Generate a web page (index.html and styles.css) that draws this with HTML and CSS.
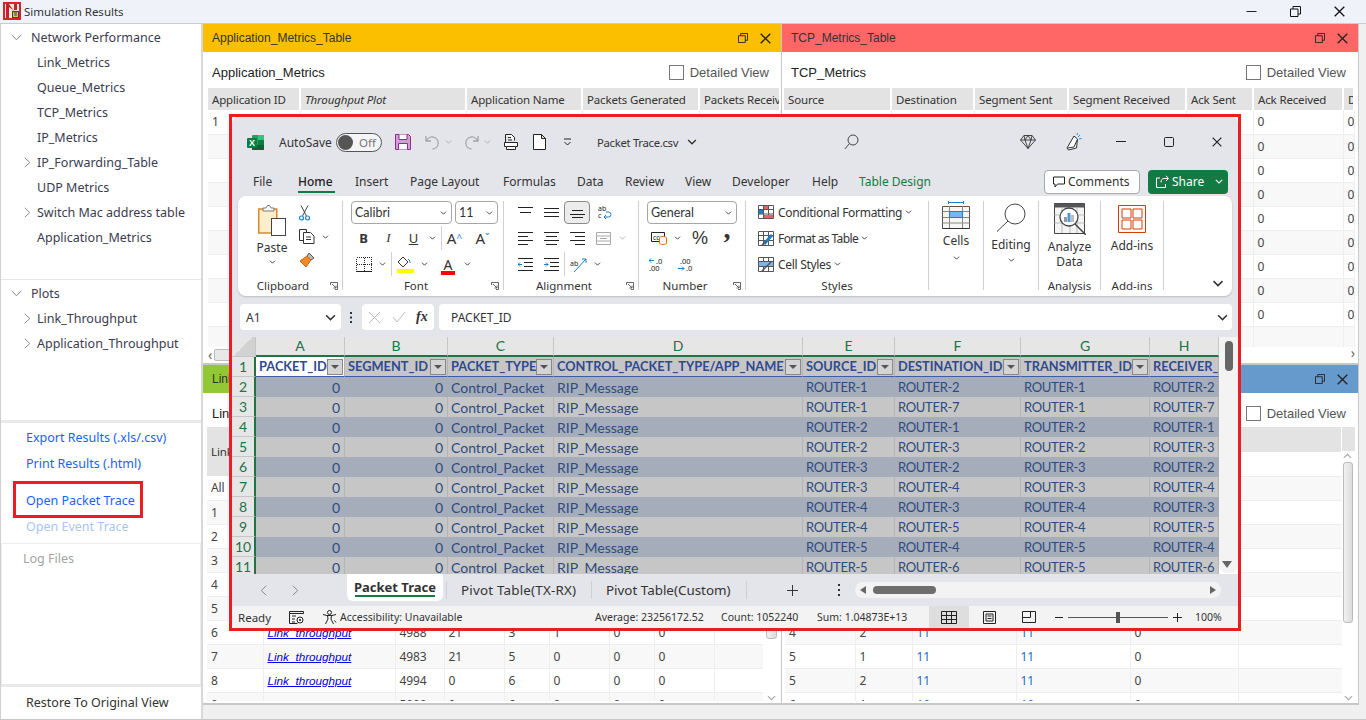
FILE: index.html
```html
<!DOCTYPE html>
<html lang="en">
<head>
<meta charset="utf-8">
<title>Simulation Results</title>
<link rel="stylesheet" href="styles.css">
</head>
<body>
<svg class="defs" width="0" height="0" aria-hidden="true">
  <symbol id="chev" viewBox="0 0 8 5"><path d="M.8.8 4 4 7.2.8" fill="none" stroke="currentColor" stroke-width="1.1"/></symbol>
  <symbol id="launch" viewBox="0 0 8 8"><path d="M.5 3V.5h7v7H5M2 2l4 4M6 3.5V6H3.5" fill="none" stroke="#555" stroke-width=".9"/></symbol>
  <symbol id="tree-down" viewBox="0 0 11 7"><path d="M.8.8 5.5 5.8 10.2.8" fill="none" stroke="#8a8a8a"/></symbol>
  <symbol id="tree-right" viewBox="0 0 7 11"><path d="M.8.8 5.8 5.5.8 10.2" fill="none" stroke="#8a8a8a"/></symbol>
  <symbol id="restore" viewBox="0 0 11 11"><path d="M.5 3h7.5v7.5H.5zM3 3V.5h7.5V8H8" fill="none" stroke="currentColor"/></symbol>
  <symbol id="close" viewBox="0 0 11 11"><path d="M.7.7l9.6 9.6M10.3.7.7 10.3" fill="none" stroke="currentColor" stroke-width="1.3"/></symbol>
</svg>

<div class="app">
  <header class="titlebar">
    <svg class="app-icon" width="18" height="18" viewBox="0 0 18 18"><rect width="18" height="18" fill="#d8232a"/><rect x="2" y="2" width="14" height="14" fill="#f6e9e4"/><path d="M3 2h3l5 7V2h3v6h-4L6 5v11H3z" fill="#c8202a"/><rect x="9.500" y="9.500" width="6" height="6" fill="#e4c35a" stroke="#2d3f6b"/><path d="M11 11h3M11 13h3" stroke="#2d3f6b"/></svg>
    <span class="titlebar-text">Simulation Results</span>
    <div class="winbtns">
      <svg width="11" height="11" viewBox="0 0 11 11"><path d="M.5 5.500h10" stroke="#222"/></svg>
      <svg class="win-max" width="11" height="11"><use href="#restore"/></svg>
      <svg width="11" height="11"><use href="#close"/></svg>
    </div>
  </header>

  <div class="content">
    <aside class="sidebar">
      <nav class="tree tree-a">
        <div class="node root"><svg class="tw" width="11" height="7"><use href="#tree-down"/></svg>Network Performance</div>
        <div class="node">Link_Metrics</div>
        <div class="node">Queue_Metrics</div>
        <div class="node">TCP_Metrics</div>
        <div class="node">IP_Metrics</div>
        <div class="node kid"><svg class="tk" width="7" height="11"><use href="#tree-right"/></svg>IP_Forwarding_Table</div>
        <div class="node">UDP Metrics</div>
        <div class="node kid"><svg class="tk" width="7" height="11"><use href="#tree-right"/></svg>Switch Mac address table</div>
        <div class="node">Application_Metrics</div>
      </nav>
      <nav class="tree tree-b">
        <div class="node root"><svg class="tw" width="11" height="7"><use href="#tree-down"/></svg>Plots</div>
        <div class="node kid"><svg class="tk" width="7" height="11"><use href="#tree-right"/></svg>Link_Throughput</div>
        <div class="node kid"><svg class="tk" width="7" height="11"><use href="#tree-right"/></svg>Application_Throughput</div>
      </nav>
      <div class="actions">
        <a class="act">Export Results (.xls/.csv)</a>
        <a class="act">Print Results (.html)</a>
        <a class="act act-trace">Open Packet Trace</a>
        <a class="act act-off">Open Event Trace</a>
      </div>
      <div class="logs">Log Files</div>
      <div class="restore">Restore To Original View</div>
    </aside>

    <main class="panels">
      <section class="panel">
        <div class="phead ph-yellow"><span>Application_Metrics_Table</span><svg class="pico" width="10" height="10"><use href="#restore"/></svg><svg width="11" height="11"><use href="#close"/></svg></div>
        <div class="ptitle"><span>Application_Metrics</span><label class="detail"><i class="cb"></i>Detailed View</label></div>
        <div class="tblwrap tw-top">
          <table class="dt dt-app">
            <colgroup><col class="a1"><col class="a2"><col class="a3"><col class="a4"><col class="a5"></colgroup>
            <thead><tr><th>Application ID</th><th class="it">Throughput Plot</th><th>Application Name</th><th>Packets Generated</th><th>Packets Received</th></tr></thead>
            <tbody>
              <tr><td>1</td><td></td><td></td><td></td><td></td></tr>
              <tr><td></td><td></td><td></td><td></td><td></td></tr>
              <tr><td></td><td></td><td></td><td></td><td></td></tr>
              <tr><td></td><td></td><td></td><td></td><td></td></tr>
              <tr><td></td><td></td><td></td><td></td><td></td></tr>
              <tr><td></td><td></td><td></td><td></td><td></td></tr>
              <tr><td></td><td></td><td></td><td></td><td></td></tr>
              <tr><td></td><td></td><td></td><td></td><td></td></tr>
              <tr><td></td><td></td><td></td><td></td><td></td></tr>
              <tr><td></td><td></td><td></td><td></td><td></td></tr>
            </tbody>
          </table>
        </div>
        <div class="hscroll"><span class="ha">&#8249;</span><i class="hthumb"></i></div>
      </section>

      <section class="panel">
        <div class="phead ph-red"><span>TCP_Metrics_Table</span><svg class="pico" width="10" height="10"><use href="#restore"/></svg><svg width="11" height="11"><use href="#close"/></svg></div>
        <div class="ptitle"><span>TCP_Metrics</span><label class="detail"><i class="cb"></i>Detailed View</label></div>
        <div class="tblwrap tw-top tw-r">
          <table class="dt dt-tcp">
            <colgroup><col class="t1"><col class="t2"><col class="t3"><col class="t4"><col class="t5"><col class="t6"><col class="t7"></colgroup>
            <thead><tr><th>Source</th><th>Destination</th><th>Segment Sent</th><th>Segment Received</th><th>Ack Sent</th><th>Ack Received</th><th>Dup Ack</th></tr></thead>
            <tbody>
              <tr><td></td><td></td><td></td><td></td><td></td><td>0</td><td>0</td></tr>
              <tr><td></td><td></td><td></td><td></td><td></td><td>0</td><td>0</td></tr>
              <tr><td></td><td></td><td></td><td></td><td></td><td>0</td><td>0</td></tr>
              <tr><td></td><td></td><td></td><td></td><td></td><td>0</td><td>0</td></tr>
              <tr><td></td><td></td><td></td><td></td><td></td><td>0</td><td>0</td></tr>
              <tr><td></td><td></td><td></td><td></td><td></td><td>0</td><td>0</td></tr>
              <tr><td></td><td></td><td></td><td></td><td></td><td>0</td><td>0</td></tr>
              <tr><td></td><td></td><td></td><td></td><td></td><td>0</td><td>0</td></tr>
              <tr><td></td><td></td><td></td><td></td><td></td><td>0</td><td>0</td></tr>
              <tr><td></td><td></td><td></td><td></td><td></td><td></td><td></td></tr>
            </tbody>
          </table>
        </div>
        <div class="hscroll hs-r"><span class="ha">&#8250;</span></div>
      </section>

      <section class="panel">
        <div class="phead ph-green"><span>Link_Metrics_Table</span></div>
        <div class="ptitle"><span>Link_Metrics</span></div>
        <div class="lowbody">
          <div class="tblwrap tw-low">
            <table class="dt dt-link">
              <colgroup><col class="l1"><col class="l2"><col class="l3"><col class="l4"><col class="l5"><col class="l6"><col class="l7"><col class="l8"><col class="l9"></colgroup>
              <thead><tr class="tall"><th>Link ID</th><th class="it">Link Plot</th><th></th><th></th><th></th><th></th><th></th><th></th><th></th></tr></thead>
              <tbody>
                <tr><td>All</td><td></td><td></td><td></td><td></td><td></td><td></td><td></td><td></td></tr>
                <tr><td>1</td><td></td><td></td><td></td><td></td><td></td><td></td><td></td><td></td></tr>
                <tr><td>2</td><td></td><td></td><td></td><td></td><td></td><td></td><td></td><td></td></tr>
                <tr><td>3</td><td></td><td></td><td></td><td></td><td></td><td></td><td></td><td></td></tr>
                <tr><td>4</td><td></td><td></td><td></td><td></td><td></td><td></td><td></td><td></td></tr>
                <tr><td>5</td><td></td><td></td><td></td><td></td><td></td><td></td><td></td><td></td></tr>
                <tr><td>6</td><td><a class="lnk">Link_throughput</a></td><td>4988</td><td>21</td><td>3</td><td>1</td><td>0</td><td>0</td><td></td></tr>
                <tr><td>7</td><td><a class="lnk">Link_throughput</a></td><td>4983</td><td>21</td><td>5</td><td>0</td><td>0</td><td>0</td><td></td></tr>
                <tr><td>8</td><td><a class="lnk">Link_throughput</a></td><td>4994</td><td>0</td><td>6</td><td>0</td><td>0</td><td>0</td><td></td></tr>
                <tr><td>9</td><td><a class="lnk">Link_throughput</a></td><td>5000</td><td>0</td><td>6</td><td>0</td><td>0</td><td>0</td><td></td></tr>
              </tbody>
            </table>
          </div>
          <div class="vscroll vs-link"><i class="vthumb vt-link"></i><svg class="vdown" width="9" height="6"><use href="#chev"/></svg></div>
        </div>
      </section>

      <section class="panel">
        <div class="phead ph-blue"><span>Queue_Metrics_Table</span><svg class="pico" width="10" height="10"><use href="#restore"/></svg><svg width="11" height="11"><use href="#close"/></svg></div>
        <div class="ptitle"><span>Queue_Metrics</span><label class="detail"><i class="cb"></i>Detailed View</label></div>
        <div class="lowbody">
          <div class="tblwrap tw-low tw-lr">
            <table class="dt dt-q">
              <colgroup><col class="q1"><col class="q2"><col class="q3"><col class="q4"><col class="q5"><col class="q6"><col class="q7"></colgroup>
              <thead><tr><th></th><th></th><th></th><th></th><th></th><th></th><th></th></tr></thead>
              <tbody>
                <tr><td></td><td></td><td></td><td></td><td></td><td></td><td></td></tr>
                <tr><td></td><td></td><td></td><td></td><td></td><td></td><td></td></tr>
                <tr><td></td><td></td><td></td><td></td><td></td><td></td><td></td></tr>
                <tr><td></td><td></td><td></td><td></td><td></td><td></td><td></td></tr>
                <tr><td></td><td></td><td></td><td></td><td></td><td></td><td></td></tr>
                <tr><td></td><td></td><td></td><td></td><td></td><td></td><td></td></tr>
                <tr><td></td><td></td><td></td><td></td><td></td><td></td><td></td></tr>
                <tr><td>4</td><td>2</td><td class="num">11</td><td class="num">11</td><td>0</td><td></td><td></td></tr>
                <tr><td>5</td><td>1</td><td class="num">11</td><td class="num">11</td><td>0</td><td></td><td></td></tr>
                <tr><td>5</td><td>2</td><td class="num">11</td><td class="num">11</td><td>0</td><td></td><td></td></tr>
                <tr><td>6</td><td>1</td><td class="num">10</td><td class="num">10</td><td>0</td><td></td><td></td></tr>
              </tbody>
            </table>
          </div>
          <div class="vscroll vs-q"><svg class="vup" width="9" height="6"><use href="#chev"/></svg><i class="vthumb vt-q"></i><svg class="vdown" width="9" height="6"><use href="#chev"/></svg></div>
        </div>
      </section>
    </main>
  </div>

  <section class="excel">
    <div class="xl">
      <div class="xl-top">
        <svg class="xl-logo" width="17" height="17" viewBox="0 0 17 17"><rect x="5" y="1" width="12" height="15" rx="1" fill="#21a366"/><rect x="11" y="1" width="6" height="5" fill="#33c481"/><rect x="11" y="6" width="6" height="5" fill="#107c41"/><rect x="5" y="11" width="12" height="5" fill="#185c37"/><rect y="4" width="10" height="10" rx="1" fill="#107c41"/><text x="5" y="12" class="xl-x">X</text></svg>
        <span class="autosave">AutoSave</span>
        <span class="toggle"><i></i>Off</span>
        <svg class="t-save" width="16" height="16" viewBox="0 0 16 16"><path d="M.5.500h13l2 2v13H.5z" fill="#d79bd9" stroke="#8a2e92"/><path d="M4 .5v5h8v-5M3.500 15.500v-6h9v6" fill="#fff" stroke="#8a2e92"/></svg>
        <svg class="t-undo" width="15" height="15" viewBox="0 0 15 15"><path d="M1 1v5h5M1.500 6a6 6 0 1 1 6 8" fill="none" stroke="#a5a5a8" stroke-width="1.300"/></svg>
        <svg class="t-c1 dim" width="7" height="4"><use href="#chev"/></svg>
        <svg class="t-redo" width="15" height="15" viewBox="0 0 15 15"><path d="M14 1v5H9M13.500 6a6 6 0 1 0-6 8" fill="none" stroke="#a5a5a8" stroke-width="1.300"/></svg>
        <svg class="t-c2 dim" width="7" height="4"><use href="#chev"/></svg>
        <svg class="t-print" width="14" height="16" viewBox="0 0 14 16"><path d="M1.500.5h6l3 3v3M1.500.5v8M4 3.500h3M4 6h4" fill="#fff" stroke="#222"/><path d="M.5 8.500h13v4h-2v3h-9v-3h-2z" fill="#fff" stroke="#222"/><path d="M3 12.500h8" stroke="#222"/></svg>
        <svg class="t-new" width="13" height="16" viewBox="0 0 13 16"><path d="M.5.500h8l4 4v11H.5zM8.500.500v4h4" fill="#fff" stroke="#222"/></svg>
        <svg class="t-cust" width="9" height="8" viewBox="0 0 9 8"><path d="M1 1h7M1.500 4 4.500 7l3-3" fill="none" stroke="#222"/></svg>
        <span class="xl-file">Packet Trace.csv</span>
        <svg class="t-fch" width="10" height="6"><use href="#chev"/></svg>
        <svg class="t-search" width="15" height="16" viewBox="0 0 15 16"><circle cx="9" cy="6" r="5" fill="none" stroke="#444"/><path d="M5.500 9.500.8 15" stroke="#444"/></svg>
        <svg class="t-gem" width="16" height="14" viewBox="0 0 16 14"><path d="M4 .5h8l3.500 4.500L8 13.500.5 5zM.5 5h15M5 5l3 8.500L11 5M4 .5 5 5l3-4.500L11 5l1-4.500" fill="none" stroke="#333" stroke-width=".9"/></svg>
        <svg class="t-pen" width="16" height="18" viewBox="0 0 16 18"><path d="M8 3 1 15l1.500 2 8-2 1-9z" fill="#fff" stroke="#333"/><path d="M2 15l6-1 3-7" fill="none" stroke="#333"/><path d="M12 4l2-2M13 6l2.500-.5M11 2l.5-2" stroke="#1f8fd6"/></svg>
        <svg class="t-min" width="10" height="2"><path d="M0 .5h10" stroke="#222"/></svg>
        <svg class="t-max" width="10" height="10"><rect x=".5" y=".5" width="9" height="9" rx="1" fill="none" stroke="#222"/></svg>
        <svg class="t-cls" width="10" height="10"><use href="#close"/></svg>
      </div>

      <div class="xl-tabs">
        <span class="tab t1">File</span>
        <span class="tab t2 on">Home</span>
        <span class="tab t3">Insert</span>
        <span class="tab t4">Page Layout</span>
        <span class="tab t5">Formulas</span>
        <span class="tab t6">Data</span>
        <span class="tab t7">Review</span>
        <span class="tab t8">View</span>
        <span class="tab t9">Developer</span>
        <span class="tab t10">Help</span>
        <span class="tab t11 grn">Table Design</span>
        <button class="comments"><svg width="12" height="12" viewBox="0 0 12 12"><path d="M.5 1h11v7H4.500L2 11V8H.5z" fill="none" stroke="#222"/></svg>Comments</button>
        <button class="share"><svg width="13" height="13" viewBox="0 0 13 13"><path d="M10 .8 12.500 3.500 10 6M12 3.500H8C6 3.500 5 5 5 7.500M4 3H.5v9.500h9V9" fill="none" stroke="#fff"/></svg>Share<svg class="sh-ch" width="8" height="5"><use href="#chev"/></svg></button>
      </div>

      <div class="ribbon">
        <div class="grp g-clip">
          <div class="grp-body clip-body">
            <div class="paste">
              <svg width="28" height="31" viewBox="0 0 28 31"><rect x=".75" y="4" width="18" height="24" fill="#fbeecd" stroke="#dc8a25" stroke-width="1.500"/><path d="M5 6V3h3l1.500-2.500h2L13 3h3v3z" fill="#fff" stroke="#777"/><rect x="13.500" y="13.500" width="14" height="17" fill="#fff" stroke="#444"/></svg>
              <span>Paste</span>
              <svg class="p-ch" width="7" height="4"><use href="#chev"/></svg>
            </div>
            <div class="clip-tools">
              <svg class="ct" width="11" height="16" viewBox="0 0 11 16"><path d="M2 .5l5.500 10.500M9 .5 3.500 11" stroke="#444" fill="none"/><circle cx="2.500" cy="13" r="2" fill="none" stroke="#1d7fcb" stroke-width="1.200"/><circle cx="8.500" cy="13" r="2" fill="none" stroke="#1d7fcb" stroke-width="1.200"/></svg>
              <div class="ct-row"><svg width="16" height="15" viewBox="0 0 16 15"><path d="M4.500 11.500H.5V.5h7v3" fill="#fff" stroke="#333"/><path d="M4.500 3.500h7l3.500 3.500v7.500H4.500zM7 8h5M7 10.500h5" fill="#fff" stroke="#333"/></svg><svg class="c-v" width="7" height="4"><use href="#chev"/></svg></div>
              <svg class="ct" width="16" height="16" viewBox="0 0 16 16"><path d="M10 1l5 5-3 2-4-4z" fill="#bbb" stroke="#555"/><path d="M8 4 1 9l6 6 5-7z" fill="#f0892a" stroke="#c9650e"/></svg>
            </div>
          </div>
          <div class="grp-label lab-l">Clipboard<svg class="launch" width="8" height="8"><use href="#launch"/></svg></div>
        </div>

        <div class="grp g-font">
          <div class="grp-body">
            <div class="sel-row">
              <div class="sel s-font"><span>Calibri</span><svg width="7" height="4"><use href="#chev"/></svg></div>
              <div class="sel s-size"><span>11</span><svg width="7" height="4"><use href="#chev"/></svg></div>
            </div>
            <div class="irow">
              <b class="ib w25 serifb">B</b><i class="ib w25 serifi">I</i><span class="ib w25 ul">U</span><svg class="iv" width="7" height="4"><use href="#chev"/></svg><i class="vsep"></i><span class="ib w25 big">A<sup>^</sup></span><span class="ib w25 big m3">A<sup class="down">&#711;</sup></span>
            </div>
            <div class="irow">
              <span class="ib w25"><svg class="crisp" width="16" height="15" viewBox="0 0 16 15"><path d="M.5.500h15v14H.5zM8 .5v14M.5 7.500h15" fill="none" stroke="#222" stroke-dasharray="1 1"/><path d="M.5 14.500h15" stroke="#222"/></svg></span><svg class="iv" width="7" height="4"><use href="#chev"/></svg><i class="vsep"></i>
              <span class="ib w26"><svg width="17" height="17" viewBox="0 0 17 17"><path d="M6 1 1 6l5 5 5-5z" fill="#fff" stroke="#333"/><path d="M11 3c2 1 2 3 2 4" fill="none" stroke="#1d7fcb"/><rect y="13" width="17" height="4" fill="#ff0"/></svg></span><svg class="iv" width="7" height="4"><use href="#chev"/></svg>
              <span class="ib w26 m4 colora">A</span><svg class="iv" width="7" height="4"><use href="#chev"/></svg>
            </div>
          </div>
          <div class="grp-label lab-l">Font<svg class="launch" width="8" height="8"><use href="#launch"/></svg></div>
        </div>

        <div class="grp g-align">
          <div class="grp-body">
            <div class="irow irow1">
              <span class="ib w26"><svg width="15" height="11" viewBox="0 0 15 11"><path d="M0 .5h15M2 5.500h11" stroke="#222"/></svg></span>
              <span class="ib w26"><svg width="15" height="11" viewBox="0 0 15 11"><path d="M0 1.500h15M0 5.500h15M0 9.500h15" stroke="#222"/></svg></span>
              <span class="ib w26 sel-btn"><svg width="15" height="11" viewBox="0 0 15 11"><path d="M2 3.500h11M0 7.500h15M2 10.500h11" stroke="#222"/></svg></span>
              <span class="ib w26 m1"><svg width="15" height="15" viewBox="0 0 15 15"><text x="1" y="6" class="mini">ab</text><text x="1" y="13" class="mini">c</text><path d="M9 7h2.500a2.500 2.500 0 0 1 0 5H7m2-2-2 2 2 2" fill="none" stroke="#1d7fcb"/></svg></span>
            </div>
            <div class="irow">
              <span class="ib w26"><svg width="15" height="13" viewBox="0 0 15 13"><path d="M0 .5h15M0 4.500h10M0 8.500h15M0 12.500h10" stroke="#222"/></svg></span>
              <span class="ib w26"><svg width="15" height="13" viewBox="0 0 15 13"><path d="M0 .5h15M2 4.500h11M0 8.500h15M2 12.500h11" stroke="#222"/></svg></span>
              <span class="ib w26"><svg width="15" height="13" viewBox="0 0 15 13"><path d="M0 .5h15M5 4.500h10M0 8.500h15M5 12.500h10" stroke="#222"/></svg></span>
              <span class="ib w26 merge"><svg width="15" height="13" viewBox="0 0 15 13"><path d="M.5.500h14v12H.5zM.5 4h14M.5 9h14M4 6.500h7" fill="none" stroke="#a8a8a8"/></svg></span><svg class="iv dim" width="7" height="4"><use href="#chev"/></svg>
            </div>
            <div class="irow">
              <span class="ib w26"><svg width="15" height="13" viewBox="0 0 15 13"><path d="M0 .5h15M6 4.500h9M6 8.500h9M0 12.500h15" stroke="#222"/><path d="M4 6.500H0m2-2-2 2 2 2" fill="none" stroke="#1d7fcb"/></svg></span>
              <span class="ib w26"><svg width="15" height="13" viewBox="0 0 15 13"><path d="M0 .5h15M6 4.500h9M6 8.500h9M0 12.500h15" stroke="#222"/><path d="M0 6.500h4m-2-2 2 2-2 2" fill="none" stroke="#1d7fcb"/></svg></span>
              <i class="vsep s1"></i>
              <span class="ib w26"><svg width="17" height="15" viewBox="0 0 17 15"><path d="M4 15 16 2m-4 0h4v4" fill="none" stroke="#1d7fcb"/><text x="0" y="9" class="mini">ab</text></svg></span><svg class="iv" width="7" height="4"><use href="#chev"/></svg>
            </div>
          </div>
          <div class="grp-label lab-l">Alignment<svg class="launch" width="8" height="8"><use href="#launch"/></svg></div>
        </div>

        <div class="grp g-num">
          <div class="grp-body">
            <div class="sel-row"><div class="sel s-num"><span>General</span><svg width="7" height="4"><use href="#chev"/></svg></div></div>
            <div class="irow">
              <span class="ib w24"><svg width="16" height="14" viewBox="0 0 16 14"><path d="M.5 1.500h13v9H.5z" fill="none" stroke="#222"/><text x="2" y="8.500" class="mini">cc</text><ellipse cx="12" cy="7" rx="3.500" ry="1.500" fill="#fff" stroke="#d9731a"/><path d="M8.500 7v5c0 2 7 2 7 0V7" fill="#fff" stroke="#d9731a"/></svg></span><svg class="iv" width="7" height="4"><use href="#chev"/></svg>
              <span class="ib w24 m4 pct">%</span>
              <span class="ib w24 m3 comma">,</span>
            </div>
            <div class="irow r-dec">
              <span class="ib w26 dec"><svg width="15" height="15" viewBox="0 0 15 15"><path d="M5 3.500H0m2-2-2 2 2 2" fill="none" stroke="#1d7fcb"/><text x="7" y="6.500" class="mini2">.0</text><text x="0" y="14" class="mini2">.00</text></svg></span>
              <span class="ib w26 m3 dec"><svg width="15" height="15" viewBox="0 0 15 15"><text x="2" y="6.500" class="mini2">.00</text><path d="M0 11.500h6m-2-2 2 2-2 2" fill="none" stroke="#1d7fcb"/><text x="8" y="14" class="mini2">.0</text></svg></span>
            </div>
          </div>
          <div class="grp-label lab-n">Number<svg class="launch" width="8" height="8"><use href="#launch"/></svg></div>
        </div>

        <div class="grp g-styles">
          <div class="grp-body st-body">
            <div class="st-row"><svg width="16" height="14" viewBox="0 0 16 14"><path d="M.5.500h15v13H.5zM.5 4.500h15M.5 9h15M5.500.5v13M10.500.5v13" fill="#fff" stroke="#555"/><rect x="1" y="5" width="4" height="4" fill="#1d7fcb"/><rect x="6" y="1" width="4" height="3" fill="#e2646a"/><rect x="6" y="10" width="9" height="3" fill="#e2646a"/></svg>Conditional Formatting<svg class="st-ch" width="7" height="4"><use href="#chev"/></svg></div>
            <div class="st-row st-fmt"><svg width="16" height="15" viewBox="0 0 16 15"><path d="M.5.500h15v14H.5zM.5 4.500h15M.5 9.500h15M5.500.5v14M10.500.5v14" fill="#fff" stroke="#555"/><path d="M6 13 14 4" stroke="#1d7fcb" stroke-width="3"/><path d="M4 14 8 10" stroke="#555" stroke-width="1.500"/></svg>Format as Table<svg class="st-ch" width="7" height="4"><use href="#chev"/></svg></div>
            <div class="st-row"><svg width="16" height="15" viewBox="0 0 16 15"><path d="M.5.500h15v14H.5zM.5 4.500h15M.5 9.500h15M5.500.5v14M10.500.5v14" fill="#fff" stroke="#555"/><rect x="1" y="5" width="14" height="4" fill="#7bb6e6"/><path d="M4 14 13 5" stroke="#555" stroke-width="1.500"/></svg>Cell Styles<svg class="st-ch" width="7" height="4"><use href="#chev"/></svg></div>
          </div>
          <div class="grp-label">Styles</div>
        </div>

        <div class="grp g-big g-cells">
          <div class="grp-body bigbody">
            <svg width="28" height="29" viewBox="0 0 28 29"><path d="M6.500 1.500h15M6.500 0v3M21.500 0v3" fill="none" stroke="#1d7fcb"/><path d="M.5 5.500h27v22H.5z" fill="#f6f6f6" stroke="#555"/><path d="M.5 10.500h27M.5 16.500h27M.5 22h27M7.500 5v22M20.500 5v22" stroke="#888"/><path d="M.5 27.500h27" stroke="#333"/><rect x="7.500" y="10.500" width="13" height="6" fill="#7bb6e6" stroke="#1d7fcb"/></svg>
            <span class="biglab">Cells</span>
            <svg class="bigch" width="7" height="4"><use href="#chev"/></svg>
          </div>
          <div class="grp-label"></div>
        </div>

        <div class="grp g-big g-edit">
          <div class="grp-body bigbody">
            <svg width="30" height="29" viewBox="0 0 30 29"><circle cx="19" cy="11" r="10" fill="#fff" stroke="#444"/><path d="M12 18 1 28.500" stroke="#444"/></svg>
            <span class="biglab">Editing</span>
            <svg class="bigch" width="7" height="4"><use href="#chev"/></svg>
          </div>
          <div class="grp-label"></div>
        </div>

        <div class="grp g-big g-ana">
          <div class="grp-body bigbody">
            <svg width="32" height="32" viewBox="0 0 32 32"><path d="M.5.500h30v30H.5z" fill="#f4f4f4" stroke="#444"/><path d="M.5.500h30v4H.5z" fill="#555"/><path d="M.5 12h30M.5 20h30M8 4v26M16 4v26M23 4v26" stroke="#bbb"/><circle cx="15" cy="14" r="9" fill="#fff" stroke="#444" stroke-width="1.300"/><rect x="10" y="14" width="3" height="5" fill="#999"/><rect x="13.500" y="10" width="3" height="9" fill="#4a9ad8"/><rect x="17" y="12" width="3" height="7" fill="#bbb"/><path d="M21 21 32 32" stroke="#444" stroke-width="1.500"/></svg>
            <span class="biglab two">Analyze<br>Data</span>
          </div>
          <div class="grp-label">Analysis</div>
        </div>

        <div class="grp g-big g-add">
          <div class="grp-body bigbody">
            <svg class="addi" width="28" height="28" viewBox="0 0 28 28"><path d="M.5.500h27v27H.5z" fill="#fff" stroke="#d83b01"/><path d="M4 4h9v9H4zM15 4h9v9h-9zM4 15h9v9H4zM15 15h9v9h-9z" fill="#fff" stroke="#d83b01"/></svg>
            <span class="biglab">Add-ins</span>
          </div>
          <div class="grp-label">Add-ins</div>
        </div>
        <svg class="collapse" width="12" height="7"><use href="#chev"/></svg>
      </div>

      <div class="fbar">
        <div class="namebox"><span>A1</span><svg width="11" height="7"><use href="#chev"/></svg></div>
        <svg class="fdots" width="3" height="13" viewBox="0 0 3 13"><rect width="2" height="2" y="1" fill="#333"/><rect width="2" height="2" y="5.500" fill="#333"/><rect width="2" height="2" y="10" fill="#333"/></svg>
        <div class="fxbox">
          <svg width="13" height="13" viewBox="0 0 13 13"><path d="M1 1l11 11M12 1 1 12" stroke="#bdbdbd"/></svg>
          <svg width="14" height="12" viewBox="0 0 14 12"><path d="M1 6l4 5 8-10" fill="none" stroke="#bdbdbd"/></svg>
          <span class="fx">fx</span>
        </div>
        <div class="formula"><span>PACKET_ID</span><svg width="11" height="7"><use href="#chev"/></svg></div>
      </div>

      <div class="sheet">
        <table class="grid">
          <colgroup><col class="c0"><col class="ca"><col class="cb2"><col class="cc"><col class="cd"><col class="ce"><col class="cf"><col class="cg"><col class="ch"></colgroup>
          <thead>
            <tr class="letters"><th class="corner"></th><th>A</th><th>B</th><th>C</th><th>D</th><th>E</th><th>F</th><th>G</th><th>H</th></tr>
          </thead>
          <tbody>
            <tr class="hdr"><th>1</th><td class="a1cell"><div>PACKET_ID<i class="fb"></i></div></td><td><div>SEGMENT_ID<i class="fb"></i></div></td><td><div>PACKET_TYPE<i class="fb"></i></div></td><td><div>CONTROL_PACKET_TYPE/APP_NAME<i class="fb"></i></div></td><td><div>SOURCE_ID<i class="fb"></i></div></td><td><div>DESTINATION_ID<i class="fb"></i></div></td><td><div>TRANSMITTER_ID<i class="fb"></i></div></td><td><div>RECEIVER_ID</div></td></tr>
            <tr><th>2</th><td class="n">0</td><td class="n">0</td><td>Control_Packet</td><td>RIP_Message</td><td>ROUTER-1</td><td>ROUTER-2</td><td>ROUTER-1</td><td>ROUTER-2</td></tr>
            <tr><th>3</th><td class="n">0</td><td class="n">0</td><td>Control_Packet</td><td>RIP_Message</td><td>ROUTER-1</td><td>ROUTER-7</td><td>ROUTER-1</td><td>ROUTER-7</td></tr>
            <tr><th>4</th><td class="n">0</td><td class="n">0</td><td>Control_Packet</td><td>RIP_Message</td><td>ROUTER-2</td><td>ROUTER-1</td><td>ROUTER-2</td><td>ROUTER-1</td></tr>
            <tr><th>5</th><td class="n">0</td><td class="n">0</td><td>Control_Packet</td><td>RIP_Message</td><td>ROUTER-2</td><td>ROUTER-3</td><td>ROUTER-2</td><td>ROUTER-3</td></tr>
            <tr><th>6</th><td class="n">0</td><td class="n">0</td><td>Control_Packet</td><td>RIP_Message</td><td>ROUTER-3</td><td>ROUTER-2</td><td>ROUTER-3</td><td>ROUTER-2</td></tr>
            <tr><th>7</th><td class="n">0</td><td class="n">0</td><td>Control_Packet</td><td>RIP_Message</td><td>ROUTER-3</td><td>ROUTER-4</td><td>ROUTER-3</td><td>ROUTER-4</td></tr>
            <tr><th>8</th><td class="n">0</td><td class="n">0</td><td>Control_Packet</td><td>RIP_Message</td><td>ROUTER-4</td><td>ROUTER-3</td><td>ROUTER-4</td><td>ROUTER-3</td></tr>
            <tr><th>9</th><td class="n">0</td><td class="n">0</td><td>Control_Packet</td><td>RIP_Message</td><td>ROUTER-4</td><td>ROUTER-5</td><td>ROUTER-4</td><td>ROUTER-5</td></tr>
            <tr><th>10</th><td class="n">0</td><td class="n">0</td><td>Control_Packet</td><td>RIP_Message</td><td>ROUTER-5</td><td>ROUTER-4</td><td>ROUTER-5</td><td>ROUTER-4</td></tr>
            <tr><th>11</th><td class="n">0</td><td class="n">0</td><td>Control_Packet</td><td>RIP_Message</td><td>ROUTER-5</td><td>ROUTER-6</td><td>ROUTER-5</td><td>ROUTER-6</td></tr>
          </tbody>
        </table>
        <div class="sheet-vs"><i class="sv-thumb"></i><i class="sv-down"></i></div>
      </div>

      <div class="sheets">
        <svg class="sh-l" width="7" height="11"><use href="#tree-right"/></svg>
        <svg class="sh-r" width="7" height="11"><use href="#tree-right"/></svg>
        <span class="stab active">Packet Trace</span>
        <i class="ssep"></i>
        <span class="stab s-tx">Pivot Table(TX-RX)</span>
        <i class="ssep"></i>
        <span class="stab s-cu">Pivot Table(Custom)</span>
        <i class="ssep"></i>
        <svg class="s-plus" width="11" height="11"><path d="M5.500 0v11M0 5.500h11" stroke="#333"/></svg>
        <svg class="s-more" width="3" height="12" viewBox="0 0 3 12"><rect y="0" width="2" height="2" fill="#333"/><rect y="5" width="2" height="2" fill="#333"/><rect y="10" width="2" height="2" fill="#333"/></svg>
        <div class="sh-scroll"><i class="tri-l"></i><i class="sh-thumb"></i><i class="tri-r"></i></div>
      </div>

      <footer class="status">
        <span>Ready</span>
        <svg class="st-mac" width="15" height="13" viewBox="0 0 15 13"><path d="M.5.500h14v2H.5zM.5 2.500v10h8M3 5h4M3 8h3M3 11h3" fill="none" stroke="#222"/><circle cx="11" cy="9" r="3" fill="none" stroke="#222"/><circle cx="11" cy="9" r="1" fill="#222"/></svg>
        <svg class="st-acc" width="15" height="15" viewBox="0 0 15 15"><circle cx="7.500" cy="2.500" r="2" fill="none" stroke="#222"/><path d="M1 4.500 5 5.500h5l4-1M5.500 5.500 6 9l-2.500 5M9.500 5.500 9 9l2.500 5" fill="none" stroke="#222"/><path d="M12.500 10.500l1.500 2" stroke="#222"/></svg>
        <span class="st-small">Accessibility: Unavailable</span>
        <span class="st-small st-avg">Average: 23256172.52</span>
        <span class="st-small st-cnt">Count: 1052240</span>
        <span class="st-small st-sum">Sum: 1.04873E+13</span>
        <span class="vbtn on"><svg width="16" height="13" viewBox="0 0 16 13"><path d="M.5.500h15v12H.5zM.5 4.500h15M.5 8.500h15M5.500.5v12M10.500.5v12" fill="none" stroke="#222"/></svg></span>
        <span class="vbtn"><svg width="13" height="13" viewBox="0 0 13 13"><path d="M.5.500h12v12H.5zM3 3h7v7H3zM4.500 5h4M4.500 7.500h4" fill="none" stroke="#222"/></svg></span>
        <span class="vbtn"><svg width="14" height="12" viewBox="0 0 14 12"><path d="M.5.500h13v11H.5zM8.500.5v6h-8" fill="none" stroke="#222"/></svg></span>
        <svg class="z-minus" width="8" height="1"><path d="M0 .5h8" stroke="#222"/></svg>
        <div class="zoom-track"><i></i></div>
        <svg class="z-plus" width="9" height="9"><path d="M4.500 0v9M0 4.500h9" stroke="#222"/></svg>
        <span class="st-small z-val">100%</span>
      </footer>
    </div>
  </section>
</div>
</body>
</html>
```

FILE: styles.css
```css
* { box-sizing: border-box; }
html, body { margin: 0; height: 100%; }
body { background: #f0f0f0; font-family: "Noto Sans", sans-serif; font-size: 12px; color: #333; overflow: hidden; }
svg { display: block; flex: none; color: #333; }
.defs { position: absolute; }
.dim { color: #aaa; }
.crisp { shape-rendering: crispEdges; }

.app { position: relative; width: 1366px; height: 720px; overflow: hidden; display: flex; flex-direction: column; }

/* host window */
.titlebar { height: 24px; background: #eff3f9; border-bottom: 1px solid #c9cdd2; display: flex; align-items: center; padding-left: 3px; flex: none; }
.app-icon { margin-top: -2px; }
.titlebar-text { margin-left: 3px; font-size: 11.500px; color: #333; }
.winbtns { margin-left: auto; display: flex; align-items: center; gap: 33px; padding-right: 21px; }
.winbtns svg { color: #111; }

.content { flex: 1; display: flex; min-height: 0; border-bottom: 1px solid #c8c8c8; }
.sidebar { width: 203px; flex: none; background: #fff; border-left: 1px solid #d0d0d0; border-right: 2px solid #d8d8d8; display: flex; flex-direction: column; }
.tree { color: #3b3b4f; }
.tree-a { height: 256px; padding-top: 1px; border-bottom: 1px solid #e6e6e6; }
.tree-b { height: 143px; padding-top: 1px; border-bottom: 3px solid #e9e9e9; }
.node { height: 25px; display: flex; align-items: center; padding-left: 36px; font-size: 12.500px; white-space: nowrap; }
.node.root { padding-left: 10px; }
.tw { margin-right: 9px; }
.node.kid { padding-left: 23px; }
.tk { margin-right: 6px; }

.actions { height: 120px; display: flex; flex-direction: column; padding: 1px 0 0 25px; }
.act { height: 26px; flex: none; display: flex; align-items: center; color: #1a5fff; font-size: 12.500px; white-space: nowrap; }
.act-trace { position: relative; margin-top: 11px; }
.act-trace::after { content: ""; box-sizing: border-box; position: absolute; left: -13px; top: -6px; width: 130px; height: 37px; border: 3px solid #ed1c24; }
.act-off { color: #a8c6fa; }
.logs { flex: 1; border: 1px solid #ededed; border-bottom: 3px solid #e9e9e9; padding: 6px 0 0 21px; color: #a3a3a3; font-size: 12.500px; }
.restore { height: 30px; flex: none; margin-bottom: 2px; display: flex; align-items: center; padding-left: 25px; color: #333; font-size: 12.500px; }

.panels { width: 1156px; display: grid; grid-template-columns: 579px 577px; grid-template-rows: 341px 340px; flex: none; }
.panel { background: #fff; display: flex; flex-direction: column; overflow: hidden; min-height: 0; border-right: 1px solid #c8c8c8; border-bottom: 2px solid #c8c8c8; }
.phead { height: 28px; flex: none; display: flex; align-items: center; padding: 0 10px 0 9px; font-family: "Liberation Sans", sans-serif; font-size: 12px; color: #333; }
.phead span { margin-right: auto; }
.phead svg { color: #222; }
.pico { margin-right: 12px; }
.ph-yellow { background: #fbbf00; }
.ph-red { background: #ff6666; }
.ph-green { background: #92c833; }
.ph-blue { background: #6699cc; }
.ptitle { height: 36px; flex: none; display: flex; align-items: center; padding: 5px 12px 1px 9px; font-family: "Liberation Sans", sans-serif; font-size: 13px; color: #222; }
.detail { margin-left: auto; display: flex; align-items: center; color: #555; font-size: 13px; }
.cb { width: 15px; height: 15px; border: 1px solid #777; background: #fff; margin-right: 6px; }

.tblwrap { overflow: hidden; padding-left: 5px; }
.tw-top { height: 259px; flex: none; }
.tw-r { padding-left: 2px; margin-right: 3px; }
.dt { table-layout: fixed; border-collapse: collapse; font-size: 11.500px; letter-spacing: -.15px; color: #444; }
.dt th { height: 22px; background: #e3e3e3; border-right: 2px solid #fff; font-weight: 400; text-align: left; padding: 0 4px; white-space: nowrap; overflow: hidden; color: #333; }
.dt th.it { font-style: italic; }
.dt td { height: 24px; padding: 0 4px; border-right: 1px solid #eee; border-bottom: 1px solid #eee; white-space: nowrap; overflow: hidden; font-size: 12px; }
.dt tbody tr:nth-child(even) td { background: #f8f8f8; }
.dt-app { width: 572px; }
.a1 { width: 92px; } .a2 { width: 166px; } .a3 { width: 116px; } .a4 { width: 117px; } .a5 { width: 81px; }
.dt-tcp { width: 570px; }
.t1 { width: 107px; } .t2 { width: 83px; } .t3 { width: 94px; } .t4 { width: 118px; } .t5 { width: 67px; } .t6 { width: 90px; } .t7 { width: 11px; }
.hscroll { flex: 1; display: flex; align-items: center; padding-left: 5px; }
.ha { color: #666; font-size: 14px; line-height: 12px; }
.hthumb { display: block; width: 60px; height: 12px; margin-left: 2px; border: 1px solid #bbb; border-radius: 2px; background: #e8e8e8; }
.hs-r { justify-content: flex-end; padding-right: 3px; padding-bottom: 4px; }

.lowbody { flex: 1; display: flex; min-height: 0; margin-top: -2px; }
.tw-low { padding-left: 4px; flex: none; width: 560px; height: 274px; }
.tw-lr { padding-left: 3px; }
.dt-link { width: 556px; }
.dt-link .tall th { height: 49px; }
.l1 { width: 56px; } .l2 { width: 132px; } .l3 { width: 49px; } .l4 { width: 60px; } .l5 { width: 45px; } .l6 { width: 60px; } .l7 { width: 45px; } .l8 { width: 60px; } .l9 { width: 49px; }
.dt-q { width: 557px; }
.dt-q th { height: 25px; }
.q1 { width: 70px; } .q2 { width: 57px; } .q3 { width: 104px; } .q4 { width: 114px; } .q5 { width: 108px; } .q6 { width: 104px; } .q7 { width: 0; }
.num { color: #1c6cc7; }
.lnk { color: #0000ee; font-style: italic; text-decoration: underline; font-family: "Liberation Sans", sans-serif; font-size: 11.700px; letter-spacing: 0; }
.vscroll { position: relative; flex: none; }
.vs-link { width: 15px; margin-left: 2px; }
.vs-q { width: 13px; background: linear-gradient(#e3e3e3 24px, transparent 24px); }
.vthumb { position: absolute; left: 1px; border: 1px solid #bbb; border-radius: 3px; background: linear-gradient(90deg, #f1f1f1, #dcdcdc); }
.vt-link { left: 1px; top: 180px; width: 11px; height: 32px; }
.vt-q { top: 35px; width: 10px; height: 161px; }
.vup { position: absolute; top: 26px; left: 1px; transform: rotate(180deg); }
.vdown { position: absolute; top: 268px; left: 2px; }
.vscroll svg { color: #aaa; }

/* Excel window */
.excel { position: absolute; left: 229px; top: 114px; width: 1012px; height: 517px; border: 3px solid #ed1c24; background: #fff; }
.xl { height: 100%; border-radius: 6px; background: #e3e5ea; display: flex; flex-direction: column; overflow: hidden; font-size: 12px; color: #333; }
.xl-top { height: 50px; flex: none; display: flex; align-items: center; }
.xl-logo { margin-left: 15px; }
.xl-x { font: 700 9px "Liberation Sans", sans-serif; fill: #fff; text-anchor: middle; }
.autosave { margin-left: 15px; width: 57px; font-size: 12px; }
.toggle { width: 46px; height: 19px; border: 1px solid #555; border-radius: 10px; display: flex; align-items: center; font-size: 11.500px; color: #777; padding-left: 1px; background: #f5f5f7; }
.toggle i { width: 15px; height: 15px; border-radius: 50%; background: #555; margin-right: 6px; }
.t-save { margin-left: 13px; }
.t-undo { margin-left: 14px; }
.t-c1 { margin-left: 5px; }
.t-redo { margin-left: 12px; }
.t-c2 { margin-left: 5px; }
.t-print { margin-left: 13px; }
.t-new { margin-left: 15px; }
.t-cust { margin-left: 17px; }
.xl-file { margin-left: 25px; width: 86px; white-space: nowrap; font-size: 11.300px; letter-spacing: -.3px; }
.t-fch { margin-left: 4px; }
.t-search { margin-left: 147px; }
.t-gem { margin-left: 161px; }
.t-pen { margin-left: 30px; }
.t-min { margin-left: 34px; }
.t-max { margin-left: 38px; }
.t-cls { margin-left: 38px; color: #222; }

.xl-tabs { height: 29px; flex: none; display: flex; align-items: center; position: relative; font-size: 12px; }
.tab { white-space: nowrap; }
.tab.t1 { margin-left: 21px; width: 45px; }
.tab.t2 { width: 57px; font-weight: 500; position: relative; color: #222; }
.tab.t2::after { content: ""; position: absolute; left: 0; top: 18px; width: 37px; height: 2px; background: #107c41; }
.tab.t3 { width: 55px; }
.tab.t4 { width: 93px; }
.tab.t5 { width: 74px; }
.tab.t6 { width: 48px; }
.tab.t7 { width: 60px; }
.tab.t8 { width: 47px; }
.tab.t9 { width: 80px; }
.tab.t10 { width: 47px; }
.tab.t11 { width: 185px; }
.grn { color: #107c41; }
.comments { height: 24px; width: 96px; display: flex; align-items: center; gap: 3px; padding: 0 0 0 8px; border: 1px solid #a8a8a8; border-radius: 4px; background: #fff; font: 12px "Noto Sans", sans-serif; color: #333; }
.share { margin-left: 8px; height: 24px; width: 80px; display: flex; align-items: center; gap: 3px; padding: 0 0 0 8px; border: 0; border-radius: 4px; background: #147a43; color: #fff; font: 12px "Noto Sans", sans-serif; }
.sh-ch { margin-left: 8px; color: #fff; }

.ribbon { position: relative; margin: 0 6px; height: 100px; flex: none; background: #fff; border-radius: 8px; box-shadow: 0 1px 2px rgba(0,0,0,.18); display: flex; padding-top: 5px; font-size: 12px; }
.grp { height: 89px; border-right: 1px solid #d0d0d0; display: flex; flex-direction: column; position: relative; flex: none; }
.g-clip { width: 105px; } .g-font { width: 161px; } .g-align { width: 135px; } .g-num { width: 107px; } .g-styles { width: 183px; } .g-cells, .g-edit { width: 55px; } .g-ana { width: 62px; } .g-add { width: 63px; }
.grp-body { flex: 1; min-height: 0; padding-left: 8px; }
.grp-label { height: 18px; line-height: 28px; text-align: center; flex: none; position: relative; font-size: 11.500px; white-space: nowrap; }
.lab-l { padding-right: 14px; }
.lab-n { padding-right: 14px; }
.launch { position: absolute; right: 4px; top: 10px; }
.clip-body { display: flex; padding-left: 12px; }
.paste { width: 44px; display: flex; flex-direction: column; align-items: center; padding-top: 4px; }
.paste span { line-height: 16px; margin-top: 4px; }
.p-ch { margin-top: 4px; }
.clip-tools { display: flex; flex-direction: column; align-items: flex-start; padding-top: 4px; padding-left: 5px; gap: 8px; }
.ct-row { display: flex; align-items: center; }
.c-v { margin-left: 7px; }
.sel-row { display: flex; gap: 3px; height: 23px; margin-bottom: 1px; }
.sel { height: 23px; border: 1px solid #a6a6a6; border-radius: 4px; display: flex; align-items: center; justify-content: space-between; padding: 0 4px 0 3px; font-family: Lato, sans-serif; font-size: 12.500px; }
.s-font { width: 101px; }
.s-size { width: 43px; }
.s-num { width: 90px; }
.irow { display: flex; align-items: center; height: 26px; }
.irow1 { height: 23px; margin-bottom: 1px; }
.ib { display: flex; align-items: center; justify-content: center; height: 24px; flex: none; font-style: normal; }
.w24 { width: 24px; } .w25 { width: 25px; } .w26 { width: 26px; }
.m1 { margin-left: 1px; } .m3 { margin-left: 3px; } .m4 { margin-left: 4px; }
.iv { margin: 0 3px; }
.vsep { display: block; width: 1px; height: 24px; background: #d0d0d0; margin: 0 0 0 2px; flex: none; }
.s1 { margin: 0; }
.serifb { font: 700 13px "Noto Sans", sans-serif; }
.serifi { font: italic 13px "Liberation Serif", serif; }
.ul { text-decoration: underline; font-size: 13px; }
.big { font-size: 15px; }
.big sup { font-size: 10px; color: #1d7fcb; line-height: 0; }
.colora { font-size: 14px; position: relative; }
.colora::after { content: ""; position: absolute; left: 6px; right: 6px; bottom: 1px; height: 4px; background: #f00; }
.sel-btn { background: #ececec; border: 1px solid #8a8a8a; border-radius: 4px; height: 23px; }
.mini { font: 7px "Noto Sans", sans-serif; fill: #222; }
.mini2 { font: 7.500px "Noto Sans", sans-serif; fill: #222; }
.pct { font: 18px "Liberation Sans", sans-serif; color: #333; }
.comma { font: 700 28px "Liberation Serif", serif; padding-bottom: 18px; }
.r-dec { margin-left: -4px; }
.st-body { padding: 0 0 0 12px; margin-top: -2px; }
.st-row { height: 26px; display: flex; align-items: center; gap: 4px; white-space: nowrap; letter-spacing: -.3px; }
.st-fmt { letter-spacing: -.6px; }
.st-ch { margin-left: -1px; }
.bigbody { display: flex; flex-direction: column; align-items: center; padding: 0; }
.biglab { line-height: 15px; margin-top: 3px; text-align: center; }
.biglab.two { margin-top: 4px; }
.bigch { margin-top: 8px; }
.g-edit .bigbody svg:first-child { margin-top: 2px; }
.g-edit .biglab { margin-top: 5px; }
.g-edit .bigch { margin-top: 6px; }
.g-ana .bigbody svg:first-child { margin-top: 2px; }
.g-add .biglab { margin-top: 5px; }
.addi { margin-top: 4px; }
.collapse { position: absolute; right: 8px; top: 84px; }

.fbar { height: 26px; flex: none; margin: 8px 6px 0 8px; display: flex; align-items: center; font-size: 12px; }
.namebox, .fxbox, .formula { height: 26px; background: #fff; border-radius: 4px; display: flex; align-items: center; }
.namebox { width: 101px; padding: 0 5px 0 6px; justify-content: space-between; }
.fdots { margin: 0 9px; }
.fxbox { width: 72px; padding-left: 6px; gap: 11px; color: #bbb; }
.fx { font: italic 700 14px "Liberation Serif", serif; color: #333; margin-left: -1px; }
.formula { flex: 1; margin-left: 5px; padding: 0 4px 0 12px; justify-content: space-between; }

.sheet { height: 237px; flex: none; margin-top: 7px; display: flex; overflow: hidden; background: #fff; }
.grid { width: 987px; flex: none; table-layout: fixed; border-collapse: separate; border-spacing: 0; font-family: Lato, sans-serif; font-size: 14px; color: #2d4a80; }
.c0 { width: 24px; } .ca { width: 89px; } .cb2 { width: 103px; } .cc { width: 106px; } .cd { width: 249px; } .ce { width: 92px; } .cf { width: 126px; } .cg { width: 129px; } .ch { width: 69px; }
.grid th { background: #e6e6e6; font-weight: 400; color: #217346; font-size: 14px; padding: 0; }
.letters th { height: 20px; border-right: 1px solid #c6c6c6; border-bottom: 2px solid #217346; line-height: 16px; }
.letters .corner { border-bottom: 1px solid #c6c6c6; background: linear-gradient(135deg, #e6e6e6 50%, #d2d2d2 50%); }
.grid tbody th { height: 20px; border-right: 2px solid #217346; border-bottom: 1px solid #c6c6c6; line-height: 18px; }
.grid td { height: 20px; padding: 0 3px; white-space: nowrap; overflow: hidden; border-right: 1px solid #b5b5b5; line-height: 19px; }
.grid tbody tr:nth-child(even) td { background: #a6adba; border-right-color: #a6adba; }
.grid tbody tr:nth-child(odd) td { background: #c6c6c6; }
.grid td:nth-child(n+6) { font-size: 13px; letter-spacing: -.3px; }
.grid td.n { text-align: right; padding-right: 4px; }
.grid tbody .hdr td { background: #c6c6c6; font-weight: 700; font-size: 12.800px; letter-spacing: 0; color: #2f4a8f; border-bottom: 1px solid #3a5ea8; padding: 0 1px 0 3px; }
.grid .hdr th { border-bottom-color: #c6c6c6; }
.grid tbody .hdr td.a1cell { background: #fff; }
.hdr td div { display: flex; align-items: center; justify-content: space-between; }
.fb { width: 16px; height: 16px; flex: none; background: #d4d4d4; border: 1px solid #888; position: relative; }
.fb::after { content: ""; position: absolute; left: 3px; top: 5px; border: 4px solid transparent; border-top: 4px solid #555; border-bottom: 0; }
.sheet-vs { flex: 1; background: #f3f3f4; position: relative; border-radius: 0 0 8px 8px; margin-bottom: 1px; }
.sv-thumb { position: absolute; left: 6px; top: 4px; width: 8px; height: 30px; border-radius: 4px; background: #666; }
.sv-down { position: absolute; left: 3px; bottom: 5px; border: 5px solid transparent; border-top: 7px solid #666; border-bottom: 0; }

.sheets { height: 32px; flex: none; display: flex; align-items: center; font-size: 13.400px; color: #333; }
.sh-l { margin-left: 28px; transform: rotate(180deg); }
.sh-r { margin-left: 25px; }
.stab { white-space: nowrap; }
.active { margin-left: 48px; width: 96px; height: 27px; margin-top: -5px; background: #fff; border-radius: 0 0 6px 6px; font-weight: 700; color: #333; text-align: center; line-height: 26px; position: relative; font-size: 13px; }
.active::after { content: ""; position: absolute; left: 8px; right: 8px; bottom: 4px; height: 2px; background: #107c41; }
.ssep { display: block; width: 1px; height: 18px; background: #cfcfcf; flex: none; margin-left: 4px; }
.s-tx { margin-left: 14px; width: 115px; letter-spacing: .2px; }
.s-cu { margin-left: 14px; width: 125px; }
.active + .ssep { margin-left: 3px; }
.s-tx + .ssep { margin-left: 15px; }
.s-cu + .ssep { margin-left: 15px; }
.s-plus { margin-left: 40px; }
.s-more { margin-left: 40px; }
.sh-scroll { margin-left: 14px; width: 366px; height: 16px; border-radius: 8px; background: #f3f3f4; display: flex; align-items: center; padding: 0 5px; }
.tri-l { border: 4px solid transparent; border-right: 6px solid #666; border-left: 0; }
.sh-thumb { width: 63px; height: 8px; margin-left: 7px; border-radius: 4px; background: #6e6e6e; }
.tri-r { margin-left: auto; border: 4px solid transparent; border-left: 6px solid #666; border-right: 0; }

.status { height: 22px; flex: none; background: #f3f3f3; display: flex; align-items: center; padding-left: 6px; font-size: 11.500px; color: #333; }
.st-mac { margin-left: 18px; }
.st-acc { margin-left: 18px; }
.st-small { font-size: 10.500px; white-space: nowrap; margin-left: 3px; }
.st-acc + .st-small { width: 127px; }
.st-avg { margin-left: 128px; width: 126px; }
.st-cnt { margin-left: 0; width: 96px; }
.st-sum { margin-left: 0; width: 112px; }
.vbtn { width: 40px; height: 22px; display: flex; align-items: center; justify-content: center; flex: none; }
.vbtn.on { background: #dedede; }
.z-minus { margin-left: 6px; }
.zoom-track { width: 100px; height: 1px; background: #555; margin-left: 5px; position: relative; flex: none; }
.zoom-track i { position: absolute; left: 48px; top: -5px; width: 4px; height: 11px; background: #555; }
.z-plus { margin-left: 5px; }
.z-val { margin-left: 13px; }
```
